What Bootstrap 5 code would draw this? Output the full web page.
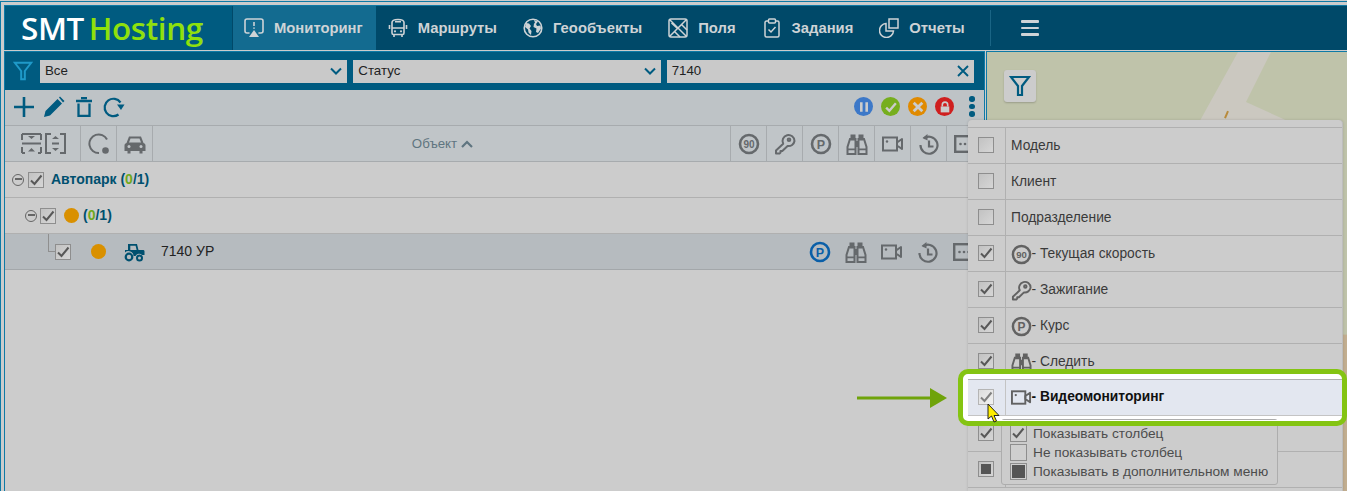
<!DOCTYPE html>
<html lang="ru">
<head>
<meta charset="utf-8">
<title>SMT Hosting</title>
<link href="https://cdn.jsdelivr.net/npm/bootstrap@5.3.0/dist/css/bootstrap.min.css" rel="stylesheet">
<style>
html,body{height:491px;overflow:hidden}
body{background:#ccc;font-family:"Liberation Sans",Arial,sans-serif;font-size:14px;color:#333;padding-top:1px;position:relative}
.shell{height:490px;border-left:1px solid #0e7aa6;border-top:1px solid #0e7aa6;padding:3px 0 0 3px;display:flex;flex-direction:column}
.topbar{height:45px;background:#004969;border-top:1px solid #0e7aa6;border-left:1px solid #0e7aa6;flex:none}
.brand{width:227px;background:#005b80;font-family:"Open Sans",sans-serif;font-weight:600;font-size:31.5px;color:#fff;padding-left:16px;line-height:44px;letter-spacing:-.4px;word-spacing:-3px;margin-right:1px;white-space:nowrap}
.brand span{color:#8fe00d}
.navi{display:flex;align-items:center;gap:10px;padding:0 14px 0 12px;color:#ced3d6;font-weight:700;font-size:14.8px;text-decoration:none;height:44px}
.navi svg{width:20px;height:20px;flex:none}
.navi.on{background:#136b90;padding-left:11px;padding-right:13px}
.sep{width:1px;height:36px;background:#1a6585;margin-left:11px}
.burger{margin-left:30px;width:18px;color:#ced3d6}
.burger i{display:block;height:2.5px;background:currentColor;margin:4px 0;border-radius:1px}
.mainrow{flex:1;display:flex;margin-top:1px;min-height:0}
.leftpane{width:981px;border-left:1px solid #0e7aa6;border-right:1px solid #0e7aa6;border-top:1px solid #0e7aa6;display:flex;flex-direction:column;flex:none}
.rightpane{flex:1;margin-left:1px;border-left:1px solid #0e7aa6;border-top:1px solid #0e7aa6;position:relative;background:#bfc3aa;overflow:hidden}
.rightpane>svg{display:block;width:100%;height:100%}
.filterbar{height:38px;background:#005b80;display:flex;align-items:center;gap:6px;padding:0 10px 0 8px;flex:none}
.filterbar .fn{width:20px;height:20px;color:#1f9ac9;margin-right:1px;flex:none}
.fld{flex:1;height:23px;background:#c9c9c9;border:0;border-radius:0;padding:0 5px;font-size:13.3px;color:#222;display:flex;align-items:center;justify-content:space-between;min-width:0}
.fld svg{width:12px;height:12px;color:#005b80;flex:none}
.toolbar{height:35px;background:#bec3c6;display:flex;align-items:center;padding:0 10px 2px 8px;flex:none;color:#005b80}
.toolbar svg{flex:none}
.st{width:19px;height:19px;border-radius:50%;margin-right:8px;display:flex;align-items:center;justify-content:center;color:#ccc}
.st svg{width:14px;height:14px}
.dots3{width:5px;margin-left:7px}
.dots3 i{display:block;width:5.5px;height:5.5px;border-radius:50%;background:#005b80;margin:2px 0}
.colhead{height:37px;background:#c0c5c8;border-top:1px solid #a7abae;border-bottom:1px solid #a7abae;display:flex;flex:none;color:#65696c;padding-right:2px}
.colhead .cell{width:36px;border-left:1px solid #a7abae;display:flex;align-items:center;justify-content:center;flex:none}
.cell svg,.rowicon svg{width:22px;height:22px}
.expand{width:75px;display:flex;align-items:center;gap:3px;padding-left:16px;flex:none}
.colname{flex:1;display:flex;align-items:center;justify-content:center;gap:4px;color:#5f7580;font-size:13.3px;border-left:1px solid #a7abae;padding-left:2px}
.colname svg{width:12px;height:12px}
.trow{height:36px;border-bottom:1px solid #b0b0b0;display:flex;align-items:center;flex:none;background:#ccc;position:relative}
.trow.sel{background:#b6bbbf;border-bottom-color:#a3a7aa}
.minus{width:12px;height:12px;border:1.5px solid #666;border-radius:50%;position:relative;flex:none}
.minus::after{content:"";position:absolute;left:1.5px;right:1.5px;top:3.5px;height:2px;background:#666}
.box{width:16px;height:16px;border:1px solid #8e8e8e;flex:none;background:linear-gradient(135deg,#c2c2c2,#d6d6d6);display:block;color:#585858}
.box svg{display:block;width:14px;height:14px}
.dotor{width:15px;height:15px;border-radius:50%;background:#d99000;flex:none}
.grp{font-weight:700;font-size:14px;color:#00506f;white-space:nowrap}
.grp b{color:#6fa820}
.conn{position:absolute;left:43px;top:0;width:8px;height:18px;border-left:1px solid #8f8f8f;border-bottom:1px solid #8f8f8f}
.rowicons{margin-left:auto;display:flex;color:#65696c;padding-right:2px}
.rowicon{width:36px;display:flex;justify-content:center;flex:none}
.colpanel{position:absolute;left:968px;top:120px;width:375px;height:371px;background:#ccc;padding-top:7px;border-radius:4px 4px 0 0;z-index:3;border-right:1px solid #bdbdbd;box-shadow:0 0 3px rgba(0,0,0,.15)}
.prow{height:36px;border-top:1px solid #b0b0b0;display:flex;align-items:center;color:#3a3a3a;position:relative}
.pchk{width:38px;height:100%;border-right:1px solid #b0b0b0;display:flex;align-items:center;justify-content:center;flex:none;padding:0 1px 2px 0}
.plabel{padding:1px 0 0 5px;display:flex;align-items:center;white-space:nowrap;font-size:13.8px}
.plabel svg{width:21px;height:21px;color:#626262;flex:none;margin-right:-.5px}
.prow.hl{background:#e3e7f0;color:#111;z-index:1;box-shadow:0 -5px 0 #fff,0 6px 0 #fff,-6px -5px 0 #fff,-6px 6px 0 #fff,-6px 0 0 #e3e7f0;border-bottom:1px solid #c4c4c4;height:37px}
.prow.hl+.prow{border-top:0;height:35px}
.prow.hl .pchk{border-right-color:#c4c4c4}
.prow.hl .box{background:linear-gradient(135deg,#dcdcdc,#f2f2f2);border-color:#b5b5b5;color:#808080}
.prow.hl .plabel{font-weight:700;padding-top:0}
.inner-sq{width:10px;height:10px;background:#555;margin:2px;display:block}
.tip{position:absolute;left:1001px;top:419px;width:277px;height:66px;background:#ccc;border:1px solid #adadad;border-radius:3px;z-index:4;padding:4px 0 0 8px;color:#4c4c4c;font-size:13.7px;line-height:19px}
.tip div{display:flex;align-items:center;gap:6px;height:19px;white-space:nowrap}
.tip .box{width:17px;height:17px;background:#cfcfcf}
.frame{position:absolute;left:958px;top:369px;width:389px;height:57px;border:5px solid #84c412;border-radius:10px;z-index:5;box-shadow:inset 0 -1px 0 #fff}
.arrowmark{position:absolute;left:857px;top:388px;width:90px;height:20px;z-index:2}
.curs{position:absolute;left:986px;top:403px;width:16px;height:22px;z-index:6}
.mapbtn{position:absolute;left:17px;top:18px;width:32px;height:32px;border-radius:3px;background:#ccc;display:flex;align-items:center;justify-content:center;color:#005b80;box-shadow:0 1px 2px rgba(0,0,0,.2)}
.mapbtn svg{width:22px;height:22px}
</style>
</head>
<body>
<svg width="0" height="0" class="d-none" style="position:absolute">
<defs>
<symbol id="i-mon" viewBox="0 0 20 20"><g fill="none" stroke="currentColor" stroke-width="1.6" stroke-linecap="round"><path d="M5 15H3a2 2 0 0 1-2-2V3a2 2 0 0 1 2-2h14a2 2 0 0 1 2 2v10a2 2 0 0 1-2 2h-2"/></g><path d="M10 12l5 7H5z" fill="currentColor"/><path d="M10 4v4M10 9.500v1.200" stroke="currentColor" stroke-width="1.600"/></symbol>
<symbol id="i-bus" viewBox="0 0 20 20"><g fill="none" stroke="currentColor" stroke-width="1.6"><path d="M4 4.500C4 2.500 6 1.500 10 1.500s6 1 6 3V15a1.500 1.500 0 0 1-1.500 1.500h-9A1.500 1.500 0 0 1 4 15z"/><path d="M1.500 7v4M18.500 7v4M7 3.800h6M4 10h12M6 16.500V19M14 16.500V19"/></g><circle cx="7" cy="13.300" r="1.100" fill="currentColor"/><circle cx="13" cy="13.300" r="1.100" fill="currentColor"/></symbol>
<symbol id="i-globe" viewBox="0 0 20 20"><circle cx="10" cy="10" r="8.800" fill="none" stroke="currentColor" stroke-width="1.600"/><path d="M3 5l3 .5 2 2.500-1.500 2.500 2 2.500-.5 4-2.500-2.500-.5-3L2 9zM11 2l4 1.500-2 2.500 1 2 3.500-.5.5 3-3 4.500-2-1 .5-3.500-3-1.500.5-3.500L12 5z" fill="currentColor"/></symbol>
<symbol id="i-field" viewBox="0 0 20 20"><g fill="none" stroke="currentColor" stroke-width="1.500"><rect x="1" y="1" width="18" height="18" rx="2"/><path d="M1.500 1.500l17 17M18.500 1.500L1.500 18.500M7 14l5 5M14 7l5 5M3.500 5L10 11"/></g></symbol>
<symbol id="i-task" viewBox="0 0 20 20"><g fill="none" stroke="currentColor" stroke-width="1.500"><path d="M6.500 3H4.500A1.500 1.500 0 0 0 3 4.500v13A1.500 1.500 0 0 0 4.500 19h11a1.500 1.500 0 0 0 1.500-1.500v-13A1.500 1.500 0 0 0 15.500 3h-2"/><rect x="6.500" y="1" width="7" height="4" rx="1"/><path d="M6.500 11.500l2.500 2.500 4.500-5"/></g></symbol>
<symbol id="i-rep" viewBox="0 0 20 20"><g fill="none" stroke="currentColor" stroke-width="1.500"><rect x="10" y="1" width="9" height="9"/><path d="M7 5.500a7 7 0 1 0 7.500 7.500H7z"/></g></symbol>
<symbol id="i-funnel" viewBox="0 0 22 22"><path d="M2 2h18l-7 9v9H9v-9z" fill="none" stroke="currentColor" stroke-width="2.200" stroke-linejoin="miter"/></symbol>
<symbol id="i-chev" viewBox="0 0 12 12"><path d="M1 3.500l5 5 5-5" fill="none" stroke="currentColor" stroke-width="2"/></symbol>
<symbol id="i-speed" viewBox="0 0 22 22"><circle cx="11" cy="11" r="9" fill="none" stroke="currentColor" stroke-width="2.600"/><text x="11" y="14.500" text-anchor="middle" font-family="Liberation Sans,sans-serif" font-weight="700" font-size="10" fill="currentColor">90</text></symbol>
<symbol id="i-key" viewBox="0 0 22 22"><g fill="none" stroke="currentColor" stroke-width="2"><path d="M20.500 8a6 6 0 1 0-11.300 2.800L2 17.500V20.500h3.500l1-1V18h1.800l5.300-5a6 6 0 0 0 6.900-5z" stroke-linejoin="round"/><circle cx="15" cy="6.800" r="1.300"/></g></symbol>
<symbol id="i-park" viewBox="0 0 22 22"><circle cx="11" cy="11" r="9" fill="none" stroke="currentColor" stroke-width="2.600"/><text x="11" y="15.500" text-anchor="middle" font-family="Liberation Sans,sans-serif" font-weight="700" font-size="12.500" fill="currentColor">P</text></symbol>
<symbol id="i-bino" viewBox="0 0 22 22"><g fill="currentColor"><path d="M4.500 1.500h5v6h-5zM12.500 1.500h5v6h-5z"/><path d="M4 6h5.500v15H1.500v-7zM12.500 6H18l2.500 8v7h-8z" fill="none" stroke="currentColor" stroke-width="2"/><path d="M1.500 15.500h8v1.800h-8zM12.500 15.500h8v1.800h-8zM9.500 8h3v6h-3z"/></g></symbol>
<symbol id="i-vid" viewBox="0 0 22 22"><g fill="none" stroke="currentColor" stroke-width="2"><rect x="1" y="4.500" width="14" height="13"/><path d="M15 9.500l5-3.500v10l-5-3.500z" stroke-linejoin="round"/></g><circle cx="5" cy="8.500" r="1.200" fill="currentColor"/></symbol>
<symbol id="i-hist" viewBox="0 0 22 22"><g fill="none" stroke="currentColor" stroke-width="2.200"><path d="M5.800 5.500A8.500 8.500 0 1 1 2.500 12"/><path d="M11 7.500v6h4.500"/></g><path d="M9.500 1v6.500L4.500 5z" fill="currentColor"/></symbol>
<symbol id="i-more" viewBox="0 0 22 22"><rect x="1.200" y="3.200" width="19.600" height="15.600" fill="none" stroke="currentColor" stroke-width="2.400"/><circle cx="6.500" cy="11" r="1.300" fill="currentColor"/><circle cx="11" cy="11" r="1.300" fill="currentColor"/><circle cx="15.500" cy="11" r="1.300" fill="currentColor"/></symbol>
<symbol id="i-check" viewBox="0 0 14 14"><path d="M2 7.500l3.500 3.500L12.500 2.500" fill="none" stroke="currentColor" stroke-width="2"/></symbol>
</defs>
</svg>

<div class="shell">
  <header class="topbar d-flex">
    <div class="brand">SMT <span>Hosting</span></div>
    <a class="navi on" href="#"><svg><use href="#i-mon"/></svg>Мониторинг</a>
    <a class="navi" href="#"><svg><use href="#i-bus"/></svg>Маршруты</a>
    <a class="navi" href="#"><svg><use href="#i-globe"/></svg>Геообъекты</a>
    <a class="navi" href="#"><svg><use href="#i-field"/></svg>Поля</a>
    <a class="navi" href="#"><svg><use href="#i-task"/></svg>Задания</a>
    <a class="navi" href="#"><svg><use href="#i-rep"/></svg>Отчеты</a>
    <div class="sep align-self-center"></div>
    <div class="burger align-self-center"><i></i><i></i><i></i></div>
  </header>

  <div class="mainrow">
    <section class="leftpane">
      <div class="filterbar">
        <svg class="fn"><use href="#i-funnel"/></svg>
        <div class="fld">Все<svg><use href="#i-chev"/></svg></div>
        <div class="fld">Статус<svg><use href="#i-chev"/></svg></div>
        <div class="fld">7140<svg viewBox="0 0 12 12"><path d="M1 1l10 10M11 1L1 11" stroke="currentColor" stroke-width="1.900" fill="none"/></svg></div>
      </div>

      <div class="toolbar">
        <svg width="22" height="22" viewBox="0 0 22 22"><path d="M11 1v20M1 11h20" stroke="currentColor" stroke-width="2.600"/></svg>
        <svg width="22" height="22" viewBox="0 0 22 22" style="margin-left:8px"><path d="M1 21l1.500-6L14.500 3l4.500 4.500L7 19.500zM16 1.500l1-1 4.500 4.500-1.500 1.500z" fill="currentColor"/></svg>
        <svg width="18" height="20" viewBox="0 0 18 20" style="margin-left:10px"><path d="M1 4h16M6 1.200h6M3.500 6.500V18.800h11V6.500" fill="none" stroke="currentColor" stroke-width="2.300"/></svg>
        <svg width="22" height="22" viewBox="0 0 22 22" style="margin-left:10px"><path d="M17.500 6.500A8.700 8.700 0 1 0 15.500 18.500" fill="none" stroke="currentColor" stroke-width="2.200"/><path d="M14 8.500h7.500L18 14z" fill="currentColor"/></svg>
        <div class="ms-auto d-flex align-items-center">
          <span class="st" style="background:#3c78c8"><svg viewBox="0 0 13 13"><path d="M4 2v9M9 2v9" stroke="currentColor" stroke-width="2.400"/></svg></span>
          <span class="st" style="background:#76ae1e"><svg viewBox="0 0 13 13"><path d="M2 7l3 3 6-7" stroke="currentColor" stroke-width="2.200" fill="none"/></svg></span>
          <span class="st" style="background:#e08a00"><svg viewBox="0 0 13 13"><path d="M2.500 2.500l8 8M10.500 2.500l-8 8" stroke="currentColor" stroke-width="2.600"/></svg></span>
          <span class="st" style="background:#cf1f1f"><svg viewBox="0 0 13 13"><path d="M4 6V4.500a2.500 2.500 0 0 1 5 0V6" fill="none" stroke="currentColor" stroke-width="1.500"/><rect x="2.500" y="6" width="8" height="5.500" fill="currentColor"/></svg></span>
          <span class="dots3"><i></i><i></i><i></i></span>
        </div>
      </div>

      <div class="colhead">
        <div class="expand">
          <svg width="21" height="21" viewBox="0 0 21 21"><g fill="none" stroke="currentColor" stroke-width="2"><path d="M1 1h19M1 1v6M20 1v6M1 10.500h19M1 14v6M20 14v6M1 20h3M17 20h3"/></g><path d="M7 3h7l-3.500 3zM7 18.500h7L10.500 15z" fill="currentColor"/></svg>
          <svg width="21" height="21" viewBox="0 0 21 21"><g fill="none" stroke="currentColor" stroke-width="2"><path d="M6 1H1v19h5M15 1h5v19h-5M7 10.500h7"/></g><path d="M7 6h7l-3.500-3zM7 15h7l-3.500 3z" fill="currentColor"/></svg>
        </div>
        <div class="cell"><svg viewBox="0 0 22 22"><path d="M19 6.500A9.300 9.300 0 1 0 11 20" fill="none" stroke="currentColor" stroke-width="2"/><circle cx="17.500" cy="17.500" r="3.300" fill="currentColor"/></svg></div>
        <div class="cell"><svg viewBox="0 0 22 22"><path d="M5 3.500h12L19.500 10c1.500.5 2 1.500 2 2.500V18h-3v2.500h-3V18h-9v2.500h-3V18h-3v-5.500c0-1 .5-2 2-2.500z" fill="currentColor"/><path d="M6.500 5.500h9l1.500 4H5z" fill="#c0c5c8"/><circle cx="5" cy="13.500" r="1.500" fill="#c0c5c8"/><circle cx="17" cy="13.500" r="1.500" fill="#c0c5c8"/></svg></div>
        <div class="colname">Объект <svg viewBox="0 0 12 12"><path d="M1 9l5-5 5 5" fill="none" stroke="currentColor" stroke-width="2.200"/></svg></div>
        <div class="cell"><svg><use href="#i-speed"/></svg></div>
        <div class="cell"><svg><use href="#i-key"/></svg></div>
        <div class="cell"><svg><use href="#i-park"/></svg></div>
        <div class="cell"><svg><use href="#i-bino"/></svg></div>
        <div class="cell"><svg><use href="#i-vid"/></svg></div>
        <div class="cell"><svg><use href="#i-hist"/></svg></div>
        <div class="cell"><svg><use href="#i-more"/></svg></div>
      </div>

      <div class="trow" style="padding-left:7px">
        <span class="minus"></span>
        <span class="box" style="margin-left:4px"><svg><use href="#i-check"/></svg></span>
        <span class="grp" style="margin-left:7px">Автопарк (<b>0</b>/1)</span>
      </div>
      <div class="trow" style="padding-left:20px">
        <span class="minus"></span>
        <span class="box" style="margin-left:3px"><svg><use href="#i-check"/></svg></span>
        <span class="dotor" style="margin-left:8px"></span>
        <span class="grp" style="margin-left:4px">(<b>0</b>/1)</span>
      </div>
      <div class="trow sel" style="padding-left:50px">
        <span class="conn"></span>
        <span class="box"><svg><use href="#i-check"/></svg></span>
        <span class="dotor" style="margin-left:20px"></span>
        <svg width="21" height="20" viewBox="0 0 21 20" style="margin-left:18px;color:#00506f;flex:none"><path d="M4 2h9l1.500 6H19c1 0 1.500.5 1.500 1.500V13H18a4 4 0 0 0-6.500 1H9.500A5 5 0 0 0 1 10.500V8h3zM6.300 3.700V8h6.300l-1-4.300z" fill="currentColor" fill-rule="evenodd"/><circle cx="5" cy="15" r="3.300" fill="none" stroke="currentColor" stroke-width="2.200"/><circle cx="15.500" cy="16" r="2.500" fill="none" stroke="currentColor" stroke-width="2"/></svg>
        <span style="margin-left:16px;font-size:14px;color:#222">7140 УР</span>
        <div class="rowicons">
          <span class="rowicon" style="color:#0a5fa8"><svg><use href="#i-park"/></svg></span>
          <span class="rowicon"><svg><use href="#i-bino"/></svg></span>
          <span class="rowicon"><svg><use href="#i-vid"/></svg></span>
          <span class="rowicon"><svg><use href="#i-hist"/></svg></span>
          <span class="rowicon"><svg><use href="#i-more"/></svg></span>
        </div>
      </div>
    </section>

    <section class="rightpane">
      <svg viewBox="0 0 360 438" preserveAspectRatio="none" aria-hidden="true">
        <path d="M251 0h33l-25 50 60 27-30 10-56-15-22 0z" fill="#cbc8c0"/>
        <path d="M241 59l-3 7" stroke="#b88b3c" stroke-width="2"/>
        <rect x="355" y="282" width="5" height="156" fill="#c2ae90"/>
      </svg>
      <div class="mapbtn"><svg><use href="#i-funnel"/></svg></div>
    </section>
  </div>
</div>

<svg class="arrowmark" viewBox="0 0 90 20"><path d="M0 10h74" stroke="#6fa30a" stroke-width="3"/><path d="M73 0l17 10-17 10z" fill="#6fa30a"/></svg>

<aside class="colpanel">
  <div class="prow"><div class="pchk"><span class="box"></span></div><div class="plabel">Модель</div></div>
  <div class="prow"><div class="pchk"><span class="box"></span></div><div class="plabel">Клиент</div></div>
  <div class="prow"><div class="pchk"><span class="box"></span></div><div class="plabel">Подразделение</div></div>
  <div class="prow"><div class="pchk"><span class="box"><svg><use href="#i-check"/></svg></span></div><div class="plabel"><svg><use href="#i-speed"/></svg>- Текущая скорость</div></div>
  <div class="prow"><div class="pchk"><span class="box"><svg><use href="#i-check"/></svg></span></div><div class="plabel"><svg><use href="#i-key"/></svg>- Зажигание</div></div>
  <div class="prow"><div class="pchk"><span class="box"><svg><use href="#i-check"/></svg></span></div><div class="plabel"><svg><use href="#i-park"/></svg>- Курс</div></div>
  <div class="prow"><div class="pchk"><span class="box"><svg><use href="#i-check"/></svg></span></div><div class="plabel"><svg><use href="#i-bino"/></svg>- Следить</div></div>
  <div class="prow hl"><div class="pchk"><span class="box"><svg><use href="#i-check"/></svg></span></div><div class="plabel"><svg><use href="#i-vid"/></svg>- Видеомониторинг</div></div>
  <div class="prow"><div class="pchk"><span class="box"><svg><use href="#i-check"/></svg></span></div><div class="plabel"></div></div>
  <div class="prow" style="border-top:1px solid #b0b0b0;height:36px"><div class="pchk"><span class="box"><i class="inner-sq"></i></span></div><div class="plabel"></div></div>
  <div class="prow" style="height:4px"></div>
</aside>

<div class="tip">
  <div><span class="box"><svg viewBox="0 0 14 14"><use href="#i-check"/></svg></span>Показывать столбец</div>
  <div><span class="box"></span>Не показывать столбец</div>
  <div><span class="box"><i class="inner-sq" style="width:13px;height:13px;margin:1px"></i></span>Показывать в дополнительном меню</div>
</div>

<div class="frame"></div>
<svg class="curs" viewBox="0 0 16 22"><path d="M2 1v15l3.500-3 2.500 6 2.500-1-2.500-5.500h5z" fill="#ffee00" stroke="#222" stroke-width="1"/></svg>
</body>
</html>
